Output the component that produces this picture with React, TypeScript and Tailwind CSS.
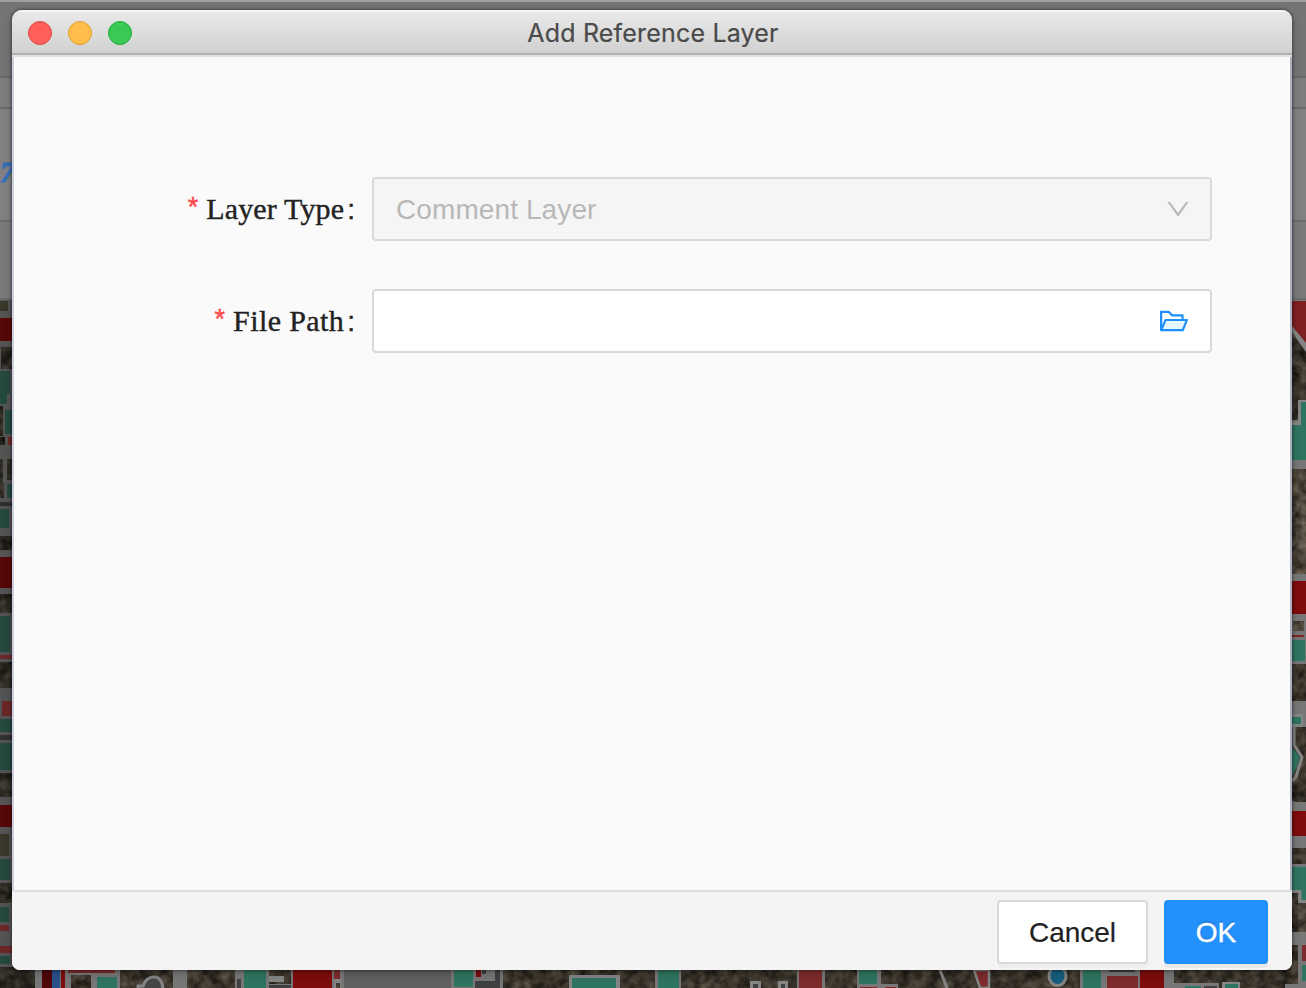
import React from "react";

type Box = [number, number, number, number, string];

const TEAL = "#2f7461";
const DIM_TEAL = "#24493f";
const SOIL = "#383229";
const LIGHT_SOIL = "#494237";
const DARK = "#28251f";
const TEXTURED = [SOIL, LIGHT_SOIL, DARK];

const leftBlocks: Box[] = [
  [0, 301, 8, 10, "#38372a"], [0, 318, 12, 23, "#570809"], [1, 347, 11, 22, DARK],
  [0, 371, 10, 23, DIM_TEAL], [0, 394, 7, 10, DIM_TEAL], [0, 406, 3, 30, DARK], [5, 410, 7, 24, DIM_TEAL],
  [0, 437, 5, 8, DARK], [8, 437, 4, 8, "#6b2728"], [0, 459, 3, 24, DARK], [7, 459, 5, 21, DARK],
  [7, 484, 5, 14, DIM_TEAL], [0, 483, 4, 15, DARK], [0, 502, 12, 4, "#302d2e"], [0, 509, 9, 19, DIM_TEAL],
  [0, 536, 12, 14, DARK], [0, 557, 12, 31, "#570809"], [0, 594, 12, 19, DARK], [0, 616, 10, 36, DIM_TEAL],
  [0, 655, 12, 4, "#6b2728"], [0, 662, 12, 26, DARK], [2, 701, 10, 15, "#6b2728"], [0, 719, 12, 13, DIM_TEAL],
  [0, 735, 12, 5, "#302f31"], [0, 743, 12, 27, DIM_TEAL], [0, 773, 12, 24, DARK], [0, 805, 12, 22, "#570809"],
  [0, 834, 9, 22, "#38372a"], [0, 859, 10, 21, DIM_TEAL], [0, 883, 12, 20, DARK], [0, 907, 9, 15, DIM_TEAL],
  [0, 925, 9, 6, "#6b2728"], [0, 946, 12, 7, "#6b2728"], [0, 956, 10, 8, DIM_TEAL], [0, 967, 35, 21, DARK],
];

const rightBlocks: Box[] = [
  [1301, 402, 5, 58, TEAL], [1292, 425, 14, 35, TEAL], [1292, 469, 14, 105, LIGHT_SOIL],
  [1292, 581, 14, 33, "#7e0c0d"], [1293, 621, 11, 10, LIGHT_SOIL], [1292, 635, 12, 2, "#7e2427"],
  [1292, 640, 13, 21, TEAL], [1292, 664, 14, 37, SOIL], [1292, 727, 14, 75, SOIL],
  [1292, 714, 11, 13, "#858585"], [1292, 717, 9, 7, TEAL], [1292, 811, 14, 25, "#7e0c0d"],
  [1292, 848, 14, 16, SOIL], [1292, 867, 14, 24, TEAL], [1300, 885, 6, 15, TEAL],
  [1292, 893, 6, 39, SOIL], [1298, 903, 8, 29, LIGHT_SOIL], [1240, 945, 58, 43, SOIL],
  [1302, 945, 4, 16, "#7e2b2d"], [1302, 965, 4, 16, TEAL],
];

const bottomBlocks: Box[] = [
  [42, 970, 10, 18, "#4f0709"], [52, 970, 8, 18, "#29518a"], [61, 970, 4, 18, "#7e0c0d"],
  [68, 970, 47, 3, "#7e2b2d"], [71, 975, 20, 13, SOIL], [97, 977, 20, 11, TEAL],
  [120, 970, 53, 18, SOIL], [187, 970, 48, 18, SOIL], [244, 970, 22, 18, TEAL], [237, 979, 4, 9, "#404040"],
  [269, 970, 22, 14, SOIL], [269, 976, 15, 6, "#858585"], [269, 985, 22, 3, "#404040"],
  [293, 970, 39, 18, "#7e0c0d"], [334, 970, 6, 18, "#7e2b2d"], [334, 979, 7, 9, "#858585"], [336, 983, 4, 5, SOIL],
  [344, 970, 107, 18, "#606060"], [454, 970, 19, 17, TEAL], [476, 970, 5, 7, "#7e0c0d"],
  [475, 981, 25, 7, "#404040"], [482, 970, 4, 4, "#404040"], [495, 970, 5, 11, "#404040"],
  [503, 970, 152, 18, SOIL], [569, 975, 51, 13, "#858585"], [572, 978, 44, 10, TEAL],
  [655, 970, 3, 18, "#777"], [658, 970, 21, 18, TEAL], [681, 970, 116, 18, SOIL],
  [750, 981, 11, 7, "#858585"], [753, 984, 5, 4, "#404040"], [778, 981, 10, 7, "#858585"], [781, 984, 4, 4, "#404040"],
  [799, 970, 23, 18, "#7e2b2d"], [825, 970, 33, 18, SOIL], [857, 970, 3, 18, "#777"], [859, 970, 18, 14, TEAL],
  [860, 987, 17, 1, "#7e2427"], [881, 970, 200, 18, SOIL], [878, 984, 20, 4, "#777"], [885, 987, 11, 1, "#7e2427"],
  [1080, 970, 27, 18, "#777"], [1083, 970, 18, 18, TEAL], [1109, 970, 26, 2, "#404040"],
  [1107, 976, 31, 12, "#7e2b2d"], [1140, 970, 24, 18, "#7e0c0d"], [1174, 970, 124, 18, SOIL],
  [1166, 983, 53, 5, "#777"], [1185, 986, 16, 2, TEAL], [1204, 986, 13, 2, "#404040"],
  [1222, 982, 18, 6, "#858585"], [1225, 984, 13, 4, TEAL], [1285, 984, 13, 4, "#777"],
];

function Blocks({ items }: { items: Box[] }) {
  return (
    <>
      {items.map(([x, y, w, h, fill], i) => (
        <rect
          key={i}
          x={x}
          y={y}
          width={w}
          height={h}
          fill={fill}
          filter={TEXTURED.includes(fill) ? "url(#grain)" : undefined}
        />
      ))}
    </>
  );
}

function MapBackdrop() {
  return (
    <svg className="block" width="1306" height="688" viewBox="0 300 1306 688" aria-hidden="true">
      <filter id="grain" x="0" y="0" width="100%" height="100%" colorInterpolationFilters="sRGB">
        <feTurbulence type="fractalNoise" baseFrequency="0.1" numOctaves="4" seed="8" />
        <feColorMatrix values="1 0 0 0 0  1 0 0 0 0  1 0 0 0 0  0 0 0 0 1" result="tone" />
        <feComposite in="SourceGraphic" in2="tone" operator="arithmetic" k1="1.2" k2="0.4" k3="0.12" k4="-0.05" />
      </filter>
      <rect y="300" width="1306" height="688" fill="#777777" />
      <rect y="300" width="12" height="670" fill="#545454" />
      <Blocks items={leftBlocks} />
      <rect x="1292" y="330" width="14" height="90" fill={SOIL} filter="url(#grain)" />
      <path d="M1292 301h14v42l-14-17z" fill="#7e2022" />
      <path d="M1292 326l14 17v9l-14-20z" fill="#858585" />
      <path d="M1292 423.500h7.500v-22h7" fill="none" stroke="#858585" strokeWidth="3" />
      <Blocks items={rightBlocks} />
      <path d="M1294 727v18l8 12-6 20-4 4" fill="none" stroke="#858585" strokeWidth="3" />
      <path d="M1292 747l8 10-5 14-3 4z" fill={TEAL} />
      <path d="M1292 801l14 3v7l-14-3zM1292 838l14 3v7l-14-3z" fill="#777" />
      <path d="M1292 891.500h8v10h6" fill="none" stroke="#858585" strokeWidth="3" />
      <Blocks items={bottomBlocks} />
      <path d="M138 990v-4h5q3-9 11-9t9 12" fill="#454545" stroke="#858585" strokeWidth="3" />
      <path d="M940 970l7 18" stroke="#858585" strokeWidth="3" />
      <path d="M974 970h15v18h-9z" fill="#7e2b2d" stroke="#858585" strokeWidth="2.500" />
      <ellipse cx="1057.500" cy="976" rx="8.500" ry="9.500" fill="#175d80" stroke="#858585" strokeWidth="3" />
    </svg>
  );
}

function Backdrop() {
  return (
    <div className="absolute inset-0 flex flex-col overflow-hidden bg-[#777777]">
      <div className="h-[2px] shrink-0 bg-[#a0a0a0]" />
      <div className="h-[76px] shrink-0 border-b-2 border-[#686868] bg-[#747474]" />
      <div className="h-[31px] shrink-0 border-b-2 border-[#6c6c6c] bg-[#7d7d7d]" />
      <div className="h-[113px] shrink-0 border-b-2 border-[#6b6b6b] bg-[#818181]">
        <span className="mt-[47px] block font-['Liberation_Serif',serif] text-[29px] leading-8 font-bold text-[#346fb8] italic [-webkit-text-stroke:1px_#346fb8]">
          7
        </span>
      </div>
      <div className="h-[78px] shrink-0 border-b-2 border-[#6c6c6c] bg-[#7a7a7a]" />
      <MapBackdrop />
    </div>
  );
}

function FieldLabel({ children, tracking }: { children: string; tracking: string }) {
  return (
    <label className="flex w-[360px] shrink-0 items-center justify-end pr-[17px] text-[#222222]">
      <span className="mr-[8px] mb-[4px] font-['Liberation_Sans',sans-serif] text-[27px] leading-8 text-[#ff4d4f] [-webkit-text-stroke:0.5px_#ff4d4f]">
        *
      </span>
      <span
        className={`font-['Liberation_Serif',serif] text-[30px] leading-10 whitespace-nowrap [-webkit-text-stroke:0.4px_#222222] ${tracking}`}
      >
        {children}
      </span>
      <span className="mt-px ml-[3px] font-['Liberation_Sans',sans-serif] text-[28px] leading-8 [-webkit-text-stroke:0.4px_#222222]">:</span>
    </label>
  );
}

function DownIcon() {
  return (
    <svg width="28" height="28" viewBox="0 0 1024 1024" fill="#b8b8b8">
      <path d="M884 256h-75c-5.1 0-9.9 2.5-12.9 6.6L512 654.2 227.9 262.6c-3-4.1-7.8-6.6-12.9-6.6h-75c-6.5 0-10.3 7.4-6.5 12.7l352.6 486.1c12.8 17.6 39 17.6 51.7 0l352.6-486.1c3.9-5.3.1-12.7-6.4-12.7z" />
    </svg>
  );
}

function FolderIcon() {
  return (
    <svg width="32" height="32" viewBox="0 0 1024 1024">
      <path fill="#e6f7ff" d="M159 768h612.3l103.4-256H262.3z" />
      <path
        fill="#1f8ffb"
        d="M928 444H820V330.4c0-17.7-14.3-32-32-32H473L355.7 186.2a8.15 8.15 0 0 0-5.5-2.2H96c-17.7 0-32 14.3-32 32v592c0 17.7 14.3 32 32 32h698c13 0 24.8-7.9 29.7-20l134-332c1.5-3.8 2.3-7.9 2.3-12 0-17.7-14.3-32-32-32zM136 256h188.5l119.6 114.4H748V444H238c-13 0-24.800 7.900-29.700 20L136 643.200V256zm635.300 512H159l103.300-256h612.300L771.300 768z"
      />
    </svg>
  );
}

export default function App() {
  return (
    <div className="relative h-[988px] w-[1306px] overflow-hidden px-3 pt-[10px] pb-[18px]">
      <Backdrop />
      <section className="relative flex h-[960px] w-[1280px] flex-col overflow-hidden rounded-t-[10px] rounded-b-[8px] bg-[#fafafa] font-['Liberation_Sans',sans-serif] shadow-[0_0_3px_1px_rgba(0,0,0,0.35),0_4px_10px_rgba(0,0,0,0.18)]">
        <header className="flex h-[47px] shrink-0 items-center border-b-2 border-[#dce1e6] bg-[#b1b1b1] pb-[2px]">
          <div className="flex h-[43px] w-full items-center border-t-2 border-[#f5f5f5] bg-linear-to-b from-[#e9e9e9] to-[#d1d1d1] px-4">
            <div className="flex w-[200px] gap-4">
              <span className="size-6 rounded-full border border-[#e24640] bg-[#ff605c]" />
              <span className="size-6 rounded-full border border-[#dfa032] bg-[#ffbd4c]" />
              <span className="size-6 rounded-full border border-[#24ab35] bg-[#3ac954]" />
            </div>
            <h1 className="flex-1 text-center font-[Inter,sans-serif] text-[25px] leading-8 tracking-[0.18px] text-[#4a4a4a] [-webkit-text-stroke:0.2px_#4a4a4a]">
              Add Reference Layer
            </h1>
            <div className="w-[198px]" />
          </div>
        </header>
        <main className="flex min-h-0 flex-1 flex-col gap-12 border-r-2 border-l-2 border-r-[#adb0bd] border-l-[#cdd0dc] pt-[120px]">
          <div className="-ml-[2px] flex h-16">
            <FieldLabel tracking="tracking-[0.15px]">Layer Type</FieldLabel>
            <div className="flex w-[840px] items-center justify-between rounded-[4px] border-2 border-[#d9d9d9] bg-[#f5f5f5] pr-[18px] pl-[22px] text-[28px] text-[#b8b8b8]">
              <span className="mt-[2px] tracking-[0.1px]">Comment Layer</span>
              <DownIcon />
            </div>
          </div>
          <div className="-ml-[2px] flex h-16">
            <FieldLabel tracking="tracking-[0.4px]">File Path</FieldLabel>
            <div className="flex w-[840px] items-center justify-end rounded-[4px] border-2 border-[#d9d9d9] bg-white pr-5">
              <FolderIcon />
            </div>
          </div>
        </main>
        <footer className="flex h-[80px] shrink-0 items-start justify-end gap-4 border-t-2 border-[#dce0e5] bg-[#f4f4f4] pt-2 pr-6">
          <button className="h-16 w-[151px] rounded-[4px] border-2 border-[#d9d9d9] bg-white pt-[2px] text-[28px] text-[#222222] shadow-[0_4px_0_rgba(0,0,0,0.025)] [-webkit-text-stroke:0.2px_#222222]">
            Cancel
          </button>
          <button className="h-16 w-[104px] rounded-[4px] bg-[#2490fb] pt-[2px] text-[28px] text-white shadow-[0_4px_0_rgba(0,0,0,0.045)] [-webkit-text-stroke:0.4px_white] [text-shadow:0_-2px_0_rgba(0,0,0,0.12)]">
            OK
          </button>
        </footer>
      </section>
    </div>
  );
}
